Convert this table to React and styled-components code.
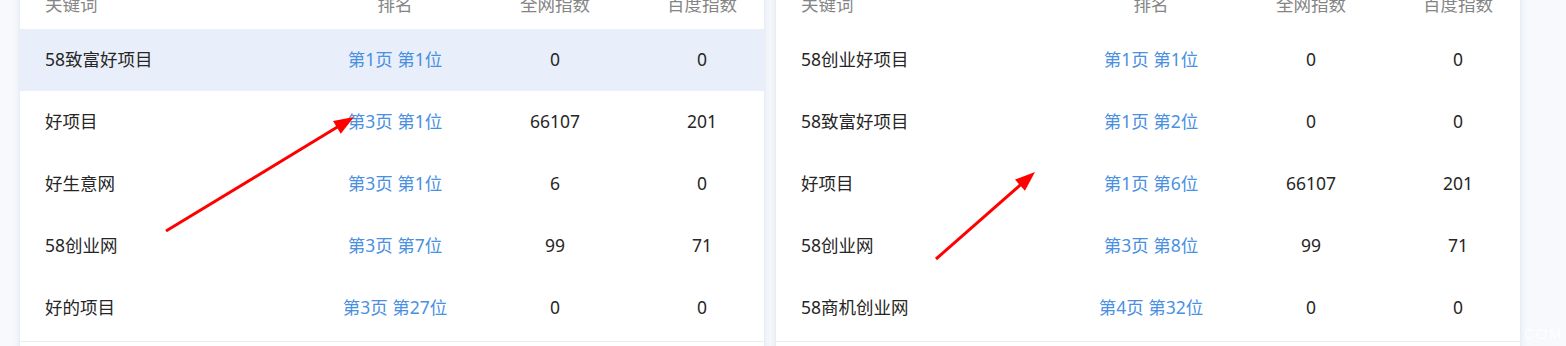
import React from "react";
import styled, { createGlobalStyle } from "styled-components";

const Global = createGlobalStyle`
  html, body {
    margin: 0;
    padding: 0;
    width: 1566px;
    height: 346px;
    overflow: hidden;
    background: #f7f9fc;
    font-family: "Noto Sans", "Noto Sans CJK SC", sans-serif;
  }
`;

const Stage = styled.div`
  position: relative;
  width: 1566px;
  height: 346px;
  overflow: hidden;
`;

const Page = styled.div`
  display: flex;
  gap: 12px;
  padding: 0 46px 0 20px;
  margin-top: -20px;
`;

const Panel = styled.div`
  flex: 0 0 744px;
  background: #ffffff;
  box-shadow: 0 0 7px rgba(120, 150, 200, 0.22);
  padding-bottom: 40px;
`;

const Grid = styled.div`
  display: grid;
  grid-template-columns: 300px 150px 170px 1fr;
  align-items: center;
  line-height: 1;
`;

const HeaderRow = styled(Grid)`
  height: 49px;
  color: #858585;
  font-size: 17.5px;
`;

const Row = styled(Grid)`
  height: 62px;
  font-size: 17.5px;
  color: #262626;
  background: ${(p) => (p.$active ? "#e8effa" : "transparent")};
`;

const Body = styled.div`
  padding-bottom: 2px;
  border-bottom: 1px solid #e9ebee;
`;

const Cell = styled.div`
  text-align: center;
  white-space: nowrap;
`;

const KeyCell = styled(Cell)`
  text-align: left;
  padding-left: 25px;
`;

const RankCell = styled(Cell)`
  color: #4a90e2;
`;

const Overlay = styled.svg`
  position: absolute;
  left: 0;
  top: 0;
  pointer-events: none;
`;

const Watermark = styled.div`
  position: absolute;
  right: 4px;
  bottom: 4px;
  font-family: "Liberation Sans", sans-serif;
  font-size: 15px;
  letter-spacing: 1px;
  color: rgba(255, 255, 255, 0.85);
`;

const left = [
  ["58致富好项目", "第1页 第1位", "0", "0"],
  ["好项目", "第3页 第1位", "66107", "201"],
  ["好生意网", "第3页 第1位", "6", "0"],
  ["58创业网", "第3页 第7位", "99", "71"],
  ["好的项目", "第3页 第27位", "0", "0"],
];

const right = [
  ["58创业好项目", "第1页 第1位", "0", "0"],
  ["58致富好项目", "第1页 第2位", "0", "0"],
  ["好项目", "第1页 第6位", "66107", "201"],
  ["58创业网", "第3页 第8位", "99", "71"],
  ["58商机创业网", "第4页 第32位", "0", "0"],
];

function Table({ rows, activeIndex }) {
  return (
    <Panel>
      <HeaderRow>
        <KeyCell>关键词</KeyCell>
        <Cell>排名</Cell>
        <Cell>全网指数</Cell>
        <Cell>百度指数</Cell>
      </HeaderRow>
      <Body>
        {rows.map((r, i) => (
          <Row key={i} $active={i === activeIndex}>
            <KeyCell>{r[0]}</KeyCell>
            <RankCell>{r[1]}</RankCell>
            <Cell>{r[2]}</Cell>
            <Cell>{r[3]}</Cell>
          </Row>
        ))}
      </Body>
    </Panel>
  );
}

function Arrow({ x1, y1, x2, y2 }) {
  const dx = x2 - x1;
  const dy = y2 - y1;
  const len = Math.hypot(dx, dy);
  const ux = dx / len;
  const uy = dy / len;
  const head = 20;
  const half = 7.5;
  const bx = x2 - ux * head;
  const by = y2 - uy * head;
  const px = -uy;
  const py = ux;
  return (
    <g>
      <line x1={x1} y1={y1} x2={bx + ux * 2} y2={by + uy * 2} stroke="#ff0000" strokeWidth="3" />
      <polygon
        points={`${x2},${y2} ${bx + px * half},${by + py * half} ${bx - px * half},${by - py * half}`}
        fill="#ff0000"
      />
    </g>
  );
}

export default function App() {
  return (
    <Stage>
      <Global />
      <Page>
        <Table rows={left} activeIndex={0} />
        <Table rows={right} activeIndex={-1} />
      </Page>
      <Overlay width="1566" height="346" viewBox="0 0 1566 346">
        <Arrow x1={166} y1={231} x2={354} y2={117} />
        <Arrow x1={936} y1={259} x2={1035} y2={172} />
      </Overlay>
      <Watermark>n. COM</Watermark>
    </Stage>
  );
}
